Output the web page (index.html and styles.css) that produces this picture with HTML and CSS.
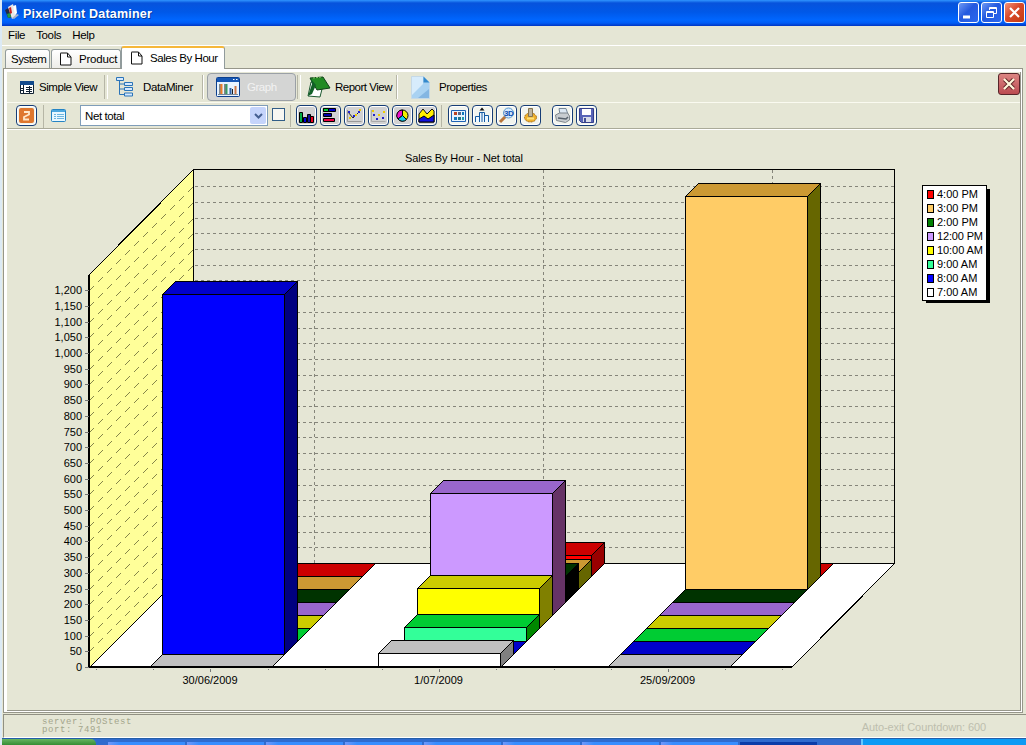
FILE: index.html
```html
<!DOCTYPE html>
<html lang="en">
<head>
<meta charset="utf-8">
<title>PixelPoint Dataminer</title>
<link rel="stylesheet" href="styles.css">
</head>
<body>
<div class="window">
  <header class="titlebar">
    <svg class="app-icon" width="16" height="18" viewBox="0 0 16 18"><path d="M1 7l5-3 3 10-5 1z" fill="#222a44"/><path d="M4 4l5-3 3 12-4 3z" fill="#e8e8e8"/><path d="M5 5l2-1 1 6-2 1z" fill="#c22"/><path d="M3 11l3-1 1 4-3 1z" fill="#294"/><path d="M8 15l5-4 2 1-5 4z" fill="#a9b4c8"/><path d="M9 3l3-1 1 8-2 2z" fill="#fff"/></svg>
    <h1>PixelPoint Dataminer</h1>
    <div class="win-buttons">
      <span class="wb"><svg width="19" height="19"><path d="M4 14h7" stroke="#fff" stroke-width="3"/></svg></span>
      <span class="wb"><svg width="19" height="19" fill="none" stroke="#fff"><path d="M4.500 8.500h7v6h-7z M4 9.500h8"/><path d="M7.500 7v-2.500h7v6h-2.500M7 5.500h8"/></svg></span>
      <span class="wb red"><svg width="19" height="19"><path d="M5 5l9 9M14 5l-9 9" stroke="#fff" stroke-width="2.200"/></svg></span>
    </div>
  </header>
  <nav class="menu"><span>File</span><span>Tools</span><span>Help</span></nav>
  <div class="tabs">
    <div class="tab system">System</div>
    <div class="tab product"><svg width="12" height="14" viewBox="0 0 12 14"><path d="M.500 1.500v11.500h10.500v-8l-3.500-4h-7zM7.500 1v4h3.500" fill="#fff" stroke="#111"/></svg>Product</div>
    <div class="tab sales"><svg width="12" height="14" viewBox="0 0 12 14"><path d="M.500 1.500v11.500h10.500v-8l-3.500-4h-7zM7.500 1v4h3.500" fill="#fff" stroke="#111"/></svg>Sales By Hour</div>
  </div>
  <main class="page">
    <div class="inner">
      <div class="views">
        <div class="view v1"><svg width="14" height="13"><path d="M.500.500h13v12h-13z" fill="#fff" stroke="#123"/><path d="M0 0h14v4h-14z" fill="#124a8c"/><path d="M3.500 4v8M1 7.500h3M1 9.500h3M6 6.500h6M6 8.500h6M6 10.500h6M9.500 5v7" stroke="#123"/></svg><span>Simple View</span></div>
        <div class="view v2"><svg width="18" height="20" fill="#d5e9ff" stroke="#2b74b8"><path d="M.500.500h7v3h-7zM8.500 5.500h8v3h-8zM8.500 10.500h8v3h-8zM8.500 16h8v3h-8z"/><path d="M3.500 4v13.500h5M3.500 7h5M3.500 12h5" fill="none"/></svg><span>DataMiner</span></div>
        <div class="view v3"><div class="pressed"><svg width="24" height="20"><rect x=".5" y=".5" width="23" height="19" rx="1" fill="#e8f3ff" stroke="#0c3f8e"/><path d="M1 1h22v4H1z" fill="#1556b5"/><path d="M17 2.500h1.500M20 2.500h1.500" stroke="#fff"/><path d="M4 7v10" stroke="#1b1b1b"/><path d="M9 7v10M16.500 12v5" stroke="#1b1b1b"/><path d="M5.500 7v10" stroke="#ef7d24" stroke-width="2"/><path d="M10.500 7v10" stroke="#3b9a63" stroke-width="2"/><path d="M14.500 11v6" stroke="#2d62a8" stroke-width="2"/><path d="M19.500 9v8" stroke="#ca7646" stroke-width="2"/><path d="M2 17.500h20" stroke="#789"/></svg><span>Graph</span></div></div>
        <div class="view v4"><svg width="24" height="22"><path d="M4 6L1 20l12 1 3-12z" fill="#fff" stroke="#1c5930"/><path d="M3 2l13-1 7 11-13 2z" fill="#218a24" stroke="#103f18"/><path d="M3 2l2 6-4 12 4-2 4-9z" fill="#126128"/><path d="M6 2l9-1" stroke="#88c770" stroke-dasharray="2 1"/></svg><span>Report View</span></div>
        <div class="view v5"><svg width="19" height="23"><path d="M.500.500h12l6 6v16h-18z" fill="#a9d2f2" stroke="#c5d9e7"/><path d="M1 1h11v7L1 19z" fill="#d7ecfc"/><path d="M12.500.500v6h6z" fill="#3489cc"/><path d="M18 13v9H7z" fill="#84b6e2"/></svg><span>Properties</span></div>
        <span class="page-close"><svg width="20" height="20"><path d="M5.500 5.500l9 9M14.500 5.500l-9 9" stroke="#60282a" stroke-width="4"/><path d="M5 5l10 10M15 5l-10 10" stroke="#fff8dc" stroke-width="2.200"/></svg></span>
      </div>
      <div class="tools">
        <span class="tool refresh"><svg width="15" height="15"><rect width="15" height="15" rx="2" fill="#df772e"/><path d="M5 4h5v2.500l-5 2.500v2.500h5" fill="none" stroke="#ffe7c9" stroke-width="1.800"/></svg></span>
        <div class="list-icon"><svg width="15" height="13"><rect x=".5" y=".5" width="14" height="12" rx="1" fill="#e9f8ff" stroke="#2584c4"/><path d="M1 1h13v2H1z" fill="#4da8df"/><path d="M3 5.500h2M3 7.500h2M3 9.500h2M6 5.500h7M6 7.500h7M6 9.500h7" stroke="#6fb6df"/></svg></div>
        <div class="combo"><span>Net total</span><i><svg width="9" height="6"><path d="M1 1l3.500 3.500 3.500-3.500" fill="none" stroke="#455f91" stroke-width="2"/></svg></i></div>
        <span class="check"></span>
        <div class="group charts">
          <span class="tool g"><svg width="17" height="17" stroke="#000"><path d="M1.500 5.500h3v10h-3z" fill="#0a4"/><path d="M5.500 10.500h3v5h-3z" fill="#00d"/><path d="M9.500 7.500h3v8h-3z" fill="#119"/><path d="M12.500 9.500h3v6h-3z" fill="#e02"/></svg></span>
          <span class="tool g"><svg width="17" height="17" stroke="#000"><path d="M1.500 1.500h12v3h-12z" fill="#00c"/><path d="M1.500 1.500h5v3h-5z" fill="#0c3"/><path d="M1.500 6.500h8v3h-8z" fill="#00a"/><path d="M1.500 11.500h11v3h-11z" fill="#e04"/></svg></span>
          <span class="tool g"><svg width="17" height="17"><path d="M1.500 3v11.500h14" fill="none" stroke="#999"/><path d="M2 5l5 6 4-4 3-3" fill="none" stroke="#222"/><path d="M2 4h2v2H2zM7 8h2v2H7zM12 4h2v2h-2z" fill="#22c"/><path d="M3 10h2v2H3zM9 7h2v2H9zM13 2h2v2h-2z" fill="#ec0"/></svg></span>
          <span class="tool g"><svg width="17" height="17"><path d="M1.500 3v11.500h14" fill="none" stroke="#aaa"/><path d="M3 7h2v2H3zM6 11h2v2H6zM12 10h2v2h-2z" fill="#22c"/><path d="M2 3h2v2H2zM8 7h2v2H8zM13 4h2v2h-2z" fill="#ec0"/></svg></span>
          <span class="tool g"><svg width="17" height="17" stroke="#000"><circle cx="8.500" cy="8.500" r="5.500" fill="#ee0"/><path d="M8.500 8.500v-5.500a5.500 5.500 0 0 0-4.500 9z" fill="#e1c"/><path d="M8.500 8.500L4 12a5.500 5.500 0 0 0 8.500.500z" fill="#1ce"/></svg></span>
          <span class="tool g"><svg width="17" height="17"><path d="M1 15V7l4-5 4 5 5-5 2 2v11z" fill="#fe0" stroke="#111"/><path d="M1 15v-3l5-3 4 3 6-4v7z" fill="#11d" stroke="#000"/></svg></span>
        </div>
        <div class="group actions">
          <span class="tool"><svg width="17" height="17"><path d="M1.500 3.500h14v11h-14z" fill="#e7f4ff" stroke="#1e62b5"/><path d="M4 5h3v3H4z" fill="#b42"/><path d="M8 5h3v3H8z" fill="#568"/><path d="M12 5h2v3h-2zM4 10h3v3H4z" fill="#17b"/><path d="M8 10h3v3H8z" fill="#278"/><path d="M12 10h2v3h-2z" fill="#29a"/></svg></span>
          <span class="tool"><svg width="17" height="17" fill="#edf7ff" stroke="#145aa2"><path d="M1.500 15V9.500h4V15M5.500 15V5.500h5V15M10.500 15V8.500h4V15M8 5v10"/><path d="M5.500 3.500l2.500-3 2.500 3z" fill="#111" stroke="none"/></svg></span>
          <span class="tool"><svg width="17" height="17"><path d="M2 15l6-6" stroke="#b8753b" stroke-width="3"/><circle cx="10.500" cy="6" r="5" fill="#d4eaff" stroke="#5c9ad0"/><text x="6" y="9" class="glyph">3D</text></svg></span>
          <span class="tool"><svg width="17" height="17"><ellipse cx="8.500" cy="10.500" rx="6" ry="4.500" fill="#eeb02c" stroke="#a66911" stroke-dasharray="2 1"/><path d="M6.500 1.500h4v8h-4z" fill="#bdb49f" stroke="#85734e"/><path d="M5 11.500h7" stroke="#ffe078" stroke-width="2"/></svg></span>
          <i class="space"></i>
          <span class="tool"><svg width="17" height="17"><path d="M5 1.500h7l2 6H6z" fill="#dce8f3" stroke="#789"/><path d="M1.500 8l4-2h8l2 3v4l-4 2.500-9-2z" fill="#c7ccd0" stroke="#7f878e"/><path d="M4 11l8 1 2-2" fill="none" stroke="#56616c" stroke-width="1.500"/></svg></span>
          <span class="tool"><svg width="17" height="17"><path d="M1.500 1.500h14v14h-12l-2-2z" fill="#5965b8" stroke="#353f8b"/><path d="M4 2h9v6H4z" fill="#fff"/><path d="M5 10h8v5H5z" fill="#d8dce8"/><path d="M6 11h2v4H6z" fill="#444f95"/></svg></span>
        </div>
      </div>
      <svg id="chart" class="chart" width="1013" height="580" viewBox="7 129 1013 580"></svg>
    </div>
  </main>
  <footer class="status"><div class="server"><p>server: POStest</p><p>port: 7491</p></div><span>Auto-exit Countdown: 600</span></footer>
  <div class="taskbar"><b class="start"></b><b class="quick"></b><b class="task"></b><b class="task"></b><b class="task"></b><b class="task"></b><b class="task"></b><b class="task"></b><b class="task"></b><b class="task"></b><b class="task on"></b><b class="rest"></b><b class="tray"></b></div>
</div>
<script src="chart.js"></script>
</body>
</html>
```
FILE: styles.css
```css
* { box-sizing: border-box; }
body { margin: 0; background: #dceaf5; overflow: hidden; font: 11.5px "Liberation Sans", Arial, sans-serif; letter-spacing: -0.45px; color: #000; }
svg { display: block; flex: none; }
.window { width: 1024px; height: 745px; margin-left: 2px; background: #e5e6d5; display: flex; flex-direction: column; }
.titlebar { height: 26px; flex: none; display: flex; align-items: center; padding: 0 0 2px 2px; background: linear-gradient(#3095ff 0, #0753dc 3px, #0058e8 12px, #0066ff 20px, #005cf5 23px, #0035c2 26px); }
.titlebar h1 { flex: 1; margin: 3px 0 0 3px; font: bold 12.5px "Liberation Sans", Arial, sans-serif; letter-spacing: 0.2px; color: #fff; text-shadow: 1px 1px #073b9c; }
.win-buttons { display: flex; gap: 2px; padding-right: 1px; }
.wb { width: 21px; height: 21px; border: 1px solid #fff; border-radius: 3px; background: linear-gradient(135deg, #6e99f4, #2459df 45%, #2a68ef); }
.wb.red { background: linear-gradient(135deg, #f19278, #d9492a 45%, #c33b13); }
.menu { height: 20px; flex: none; display: flex; gap: 11px; padding: 2px 6px; line-height: 14px; border-bottom: 1px solid #fff; letter-spacing: -0.35px; }
.tabs { height: 22px; flex: none; display: flex; align-items: flex-end; padding-left: 3px; position: relative; z-index: 1; }
.tab { display: flex; border: 1px solid #919b9c; border-bottom: 0; border-radius: 3px 3px 0 0; background: linear-gradient(#fff, #ededE8); height: 19px; align-items: center; white-space: nowrap; }
.system { width: 45px; padding-left: 5px; letter-spacing: -0.5px; }
.product { width: 70px; margin-left: 1px; padding-left: 8px; gap: 7px; letter-spacing: -0.2px; }
.sales { width: 104px; height: 23px; margin-bottom: -1px; background: #fff; border-top: 2px solid #f5b73b; padding: 0 0 2px 9px; gap: 7px; }
.page { width: 1020px; height: 645px; flex: none; margin-left: 1px; border: 1px solid #96968a; padding: 3px 1px 1px 3px; background: #fff; }
.inner { height: 639px; background: #e5e6d5; border-right: 1px solid #96968a; border-bottom: 1px solid #96968a; }
.views { height: 31px; border-bottom: 1px solid #fafaf0; display: flex; }
.view { display: flex; align-items: center; white-space: nowrap; }
.view::after { content: ""; align-self: center; height: 24px; width: 2px; border-left: 1px solid #b6b6a6; border-right: 1px solid #fff; margin-left: auto; }
.v1 { width: 101px; padding-left: 13px; gap: 5px; }
.v2 { width: 96px; padding-left: 8px; gap: 9px; letter-spacing: -0.35px; }
.v3 { width: 97px; padding-left: 3px; }
.v4 { width: 94px; padding-left: 6px; gap: 4px; letter-spacing: -0.5px; }
.v4 span { width: 58px; }
.v5 { width: 150px; padding-left: 16px; gap: 9px; }
.v5::after { display: none; }
.pressed { width: 89px; height: 28px; display: flex; align-items: center; gap: 7px; padding-left: 8px; border: 1px solid #9aa0a6; border-radius: 4px; background: #d4d5d4; color: #f2f2f2; }
.page-close { margin: 1px 0 0 auto; width: 22px; height: 22px; border: 1px solid #57252a; border-radius: 3px; background: linear-gradient(#dc8582, #bb4b51); }
.tools { height: 26px; border-bottom: 1px solid #aaaa99; display: flex; align-items: flex-start; padding: 2px 0 0 9px; box-shadow: 0 1px #fff; }
.tool { width: 21px; height: 21px; border: 1px solid #163d76; border-radius: 4px; background: #f2f4ee; padding: 1px; box-shadow: inset 0 0 0 1px #fff; flex: none; }
.g { background: #d2d2d2; }
.refresh { padding: 2px; }
.list-icon { height: 23px; width: 37px; border-left: 1px solid #b6b6a6; margin-left: 6px; padding: 4px 0 0 7px; }
.combo { width: 188px; height: 21px; border: 1px solid #7f9db9; background: #fff; display: flex; justify-content: space-between; padding-left: 4px; line-height: 20px; letter-spacing: -0.4px; }
.combo i { width: 16px; margin: 1px; border-radius: 2px; background: #c5d4fb; display: grid; place-items: center; }
.check { width: 13px; height: 13px; border: 1px solid #315d87; background: #f7f7f2; margin: 3px 0 0 4px; }
.group { display: flex; gap: 3px; }
.charts { margin-left: 5px; padding-left: 5px; border-left: 1px solid #b6b6a6; height: 22px; }
.actions { margin-left: 4px; padding-left: 6px; border-left: 1px solid #b6b6a6; height: 22px; }
.space { width: 5px; }
.glyph { font: bold 8px "Liberation Sans", sans-serif; fill: #1050b0; }
.chart text { font: 11px "Liberation Sans", Arial, sans-serif; letter-spacing: 0; }
.status { height: 24px; flex: none; margin: 1px 0 0 1px; border-top: 1px solid #909083; border-left: 1px solid #909083; border-bottom: 1px solid #fff; display: flex; justify-content: space-between; padding: 3px 40px 0 38px; }
.server p { margin: 0; height: 8px; font: 9px/9px "Liberation Mono", monospace; letter-spacing: 0.6px; color: #a3a58b; }
.status span { font-size: 11px; letter-spacing: -0.1px; line-height: 18px; color: #bdbeae; }
.taskbar { flex: 1; display: flex; background: #2f6bce; border-top: 1px solid #245fa9; }
.start { width: 94px; border-radius: 0 5px 0 0; background: linear-gradient(#67b562, #358d35); }
.quick { width: 12px; }
.task { width: 77px; margin: 3px 2px 0 0; background: linear-gradient(90deg, #6f97fa, #378dff 12px); }
.task.on { background: #0b3da9; }
.rest { flex: 1; }
.tray { width: 165px; background: #0d9af4; border-left: 2px solid #65c8ff; }
```
FILE: chart.js
```js
const chart = document.getElementById('chart');
const parts = [];
const poly = (pts, fill, stroke = '#000') =>
  parts.push(`<polygon points="${pts}" fill="${fill}" stroke="${stroke}"/>`);
const line = (x1, y1, x2, y2, stroke = '#000', extra = '') =>
  parts.push(`<line x1="${x1}" y1="${y1}" x2="${x2}" y2="${y2}" stroke="${stroke}" ${extra}/>`);
const label = (x, y, text, anchor, length) =>
  parts.push(`<text x="${x}" y="${y}" text-anchor="${anchor}" ${length ? `textLength="${length}"` : ''}>${text}</text>`);
const DEPTH = 13;
const FLOOR = 667;
const dash = 'stroke-dasharray="3 3"';

parts.push('<g transform="translate(.5 .5)" shape-rendering="crispEdges">');
poly('89,274 193,169 193,563 89,667', '#ffff99');
poly('89,667 193,563 894,563 791,667', '#fff');
for (let k = 1; k <= 24; k++) {
  const y = Math.round(563 - k * 15.7);
  line(194, y, 893, y, '#85857a', dash);
}
for (let k = 1; k <= 24; k++) {
  const y = Math.round(FLOOR - k * 15.7);
  line(89, y, 193, y - 104, '#85854a', 'stroke-dasharray="7 5.700"');
}
for (const x of [314, 543, 772]) line(x, 169, x, 562, '#85857a', dash);
line(193, 169, 894, 169);
line(894, 169, 894, 563);

// face, top and side colours, front row to back row
const series = [
  ['7:00 AM', '#ffffff', '#c0c0c0', '#808080'],
  ['8:00 AM', '#0000ff', '#0000cc', '#000080'],
  ['9:00 AM', '#33ff99', '#00cc33', '#008800'],
  ['10:00 AM', '#ffff00', '#cccc00', '#808000'],
  ['12:00 PM', '#cc99ff', '#9966cc', '#663366'],
  ['2:00 PM', '#008000', '#003300', '#000000'],
  ['3:00 PM', '#ffcc66', '#cc9933', '#666600'],
  ['4:00 PM', '#ff0000', '#cc0000', '#990000']
];
const groups = [
  { x: 149, heights: [0, 360, 0, 0, 0, 0, 0, 0] },
  { x: 378, heights: [14, 0, 14, 40, 122, 26, 17, 21] },
  { x: 607, heights: [0, 0, 0, 0, 0, 0, 393, 0] }
];
for (const g of groups) {
  for (let i = 7; i >= 0; i--) {
    const [, face, top, side] = series[i];
    const h = g.heights[i];
    const l = g.x + i * DEPTH;
    const r = l + 122;
    const b = FLOOR - i * DEPTH;
    const t = b - h;
    const d = DEPTH;
    poly(`${l},${t} ${l + d},${t - d} ${r + d},${t - d} ${r},${t}`, top);
    if (h) {
      poly(`${r},${t} ${r + d},${t - d} ${r + d},${b - d} ${r},${b}`, side);
      poly(`${l},${t} ${r},${t} ${r},${b} ${l},${b}`, face);
    }
  }
}
line(88, 274, 88, 667, '#000', 'stroke-width="2"');
line(88, 666.5, 791, 666.5, '#000', 'stroke-width="2"');
for (let k = 0; k <= 24; k++) {
  const y = Math.round(FLOOR - k * 15.7);
  line(84, y, 88, y, '#777');
}
for (let k = 0; k <= 12; k++) {
  const x = Math.round(96 + k * 57.2);
  line(x, 668, x, k % 4 === 2 ? 671 : 669, '#777');
}
poly('926,189 989,189 989,302 926,302', '#000');
poly('922,185 986,185 986,300 922,300', '#fff');
series.forEach((s, i) => {
  const y = 288 - i * 14;
  poly(`927,${y} 933,${y} 933,${y + 8} 927,${y + 8}`, s[1]);
});
parts.push('</g>');

label(405, 162, 'Sales By Hour - Net total', 'start', 118);
for (let k = 0; k <= 24; k++) {
  label(82, Math.round(671 - k * 15.7), (k * 50).toLocaleString('en-US'), 'end');
}
label(210, 684, '30/06/2009', 'middle');
label(438.5, 684, '1/07/2009', 'middle');
label(667.5, 684, '25/09/2009', 'middle');
series.forEach((s, i) => label(937, 296 - i * 14, s[0], 'start', i === 3 || i === 4 ? 46 : undefined));
chart.innerHTML = parts.join('');
```
